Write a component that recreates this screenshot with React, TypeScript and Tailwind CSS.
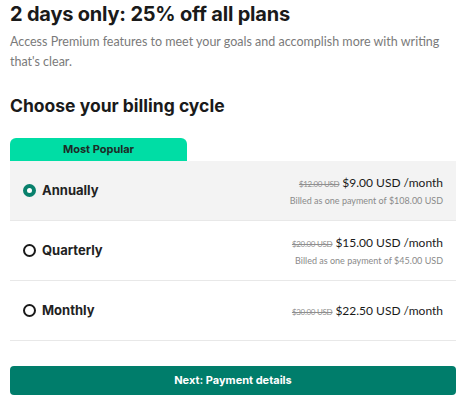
const plans = [
  { id: 'annual', label: 'Annually', was: '$12.00 USD', price: '$9.00 USD /month', billed: 'Billed as one payment of $108.00 USD' },
  { id: 'quarter', label: 'Quarterly', was: '$20.00 USD', price: '$15.00 USD /month', billed: 'Billed as one payment of $45.00 USD' },
  { id: 'month', label: 'Monthly', was: '$30.00 USD', price: '$22.50 USD /month', billed: '' },
]

export default function App() {
  const selected = 'annual'
  return (
    <div className="w-[469px] h-[403px] bg-white pl-[10px] pr-[13px] pt-[1px] font-['Inter',sans-serif] text-[#1a1a1a]">
      <h1 className="text-[20px] leading-[26px] font-bold tracking-[-0.2px]">2 days only: 25% off all plans</h1>
      <p className="mt-[5px] text-[12.5px] leading-[20px] text-[#7a7a7a] font-['Lato',sans-serif]">
        Access Premium features to meet your goals and accomplish more with writing that's clear.
      </p>
      <h2 className="mt-[22px] text-[17.5px] leading-[24px] font-bold">Choose your billing cycle</h2>
      <div className="mt-[20px] w-[177px] h-[23px] rounded-t-[6px] bg-[#00dda5] flex items-center justify-center text-[11px] font-bold text-[#1d2b25]">
        Most Popular
      </div>
      <div>
        {plans.map((p) => {
          const on = p.id === selected
          return (
            <div
              key={p.id}
              className={`h-[60px] flex items-center justify-between pl-[13px] pr-[13px] border-b border-[#e8e8e8] ${on ? 'bg-[#f3f3f3]' : 'bg-white'}`}
            >
              <div className="flex items-center gap-[6px]">
                <span
                  className={`w-[13px] h-[13px] rounded-full ${on ? 'border-[4px] border-[#08806c]' : 'border-[2.5px] border-[#1a1a1a]'} bg-white`}
                />
                <span className="text-[13px] font-bold text-[#222]">{p.label}</span>
              </div>
              <div className="flex flex-col items-end font-['Lato',sans-serif]">
                <div className="flex items-baseline gap-[3px]">
                  <span className="text-[8px] tracking-[-0.3px] text-[#8f8f8f] line-through">{p.was}</span>
                  <span className="text-[12px] text-[#1a1a1a]">{p.price}</span>
                </div>
                {p.billed && <div className="mt-[2px] text-[9px] text-[#8a8a8a]">{p.billed}</div>}
              </div>
            </div>
          )
        })}
      </div>
      <button className="mt-[25px] w-full h-[29px] rounded-[4px] bg-[#007d6b] text-white text-[11px] font-bold">
        Next: Payment details
      </button>
    </div>
  )
}
